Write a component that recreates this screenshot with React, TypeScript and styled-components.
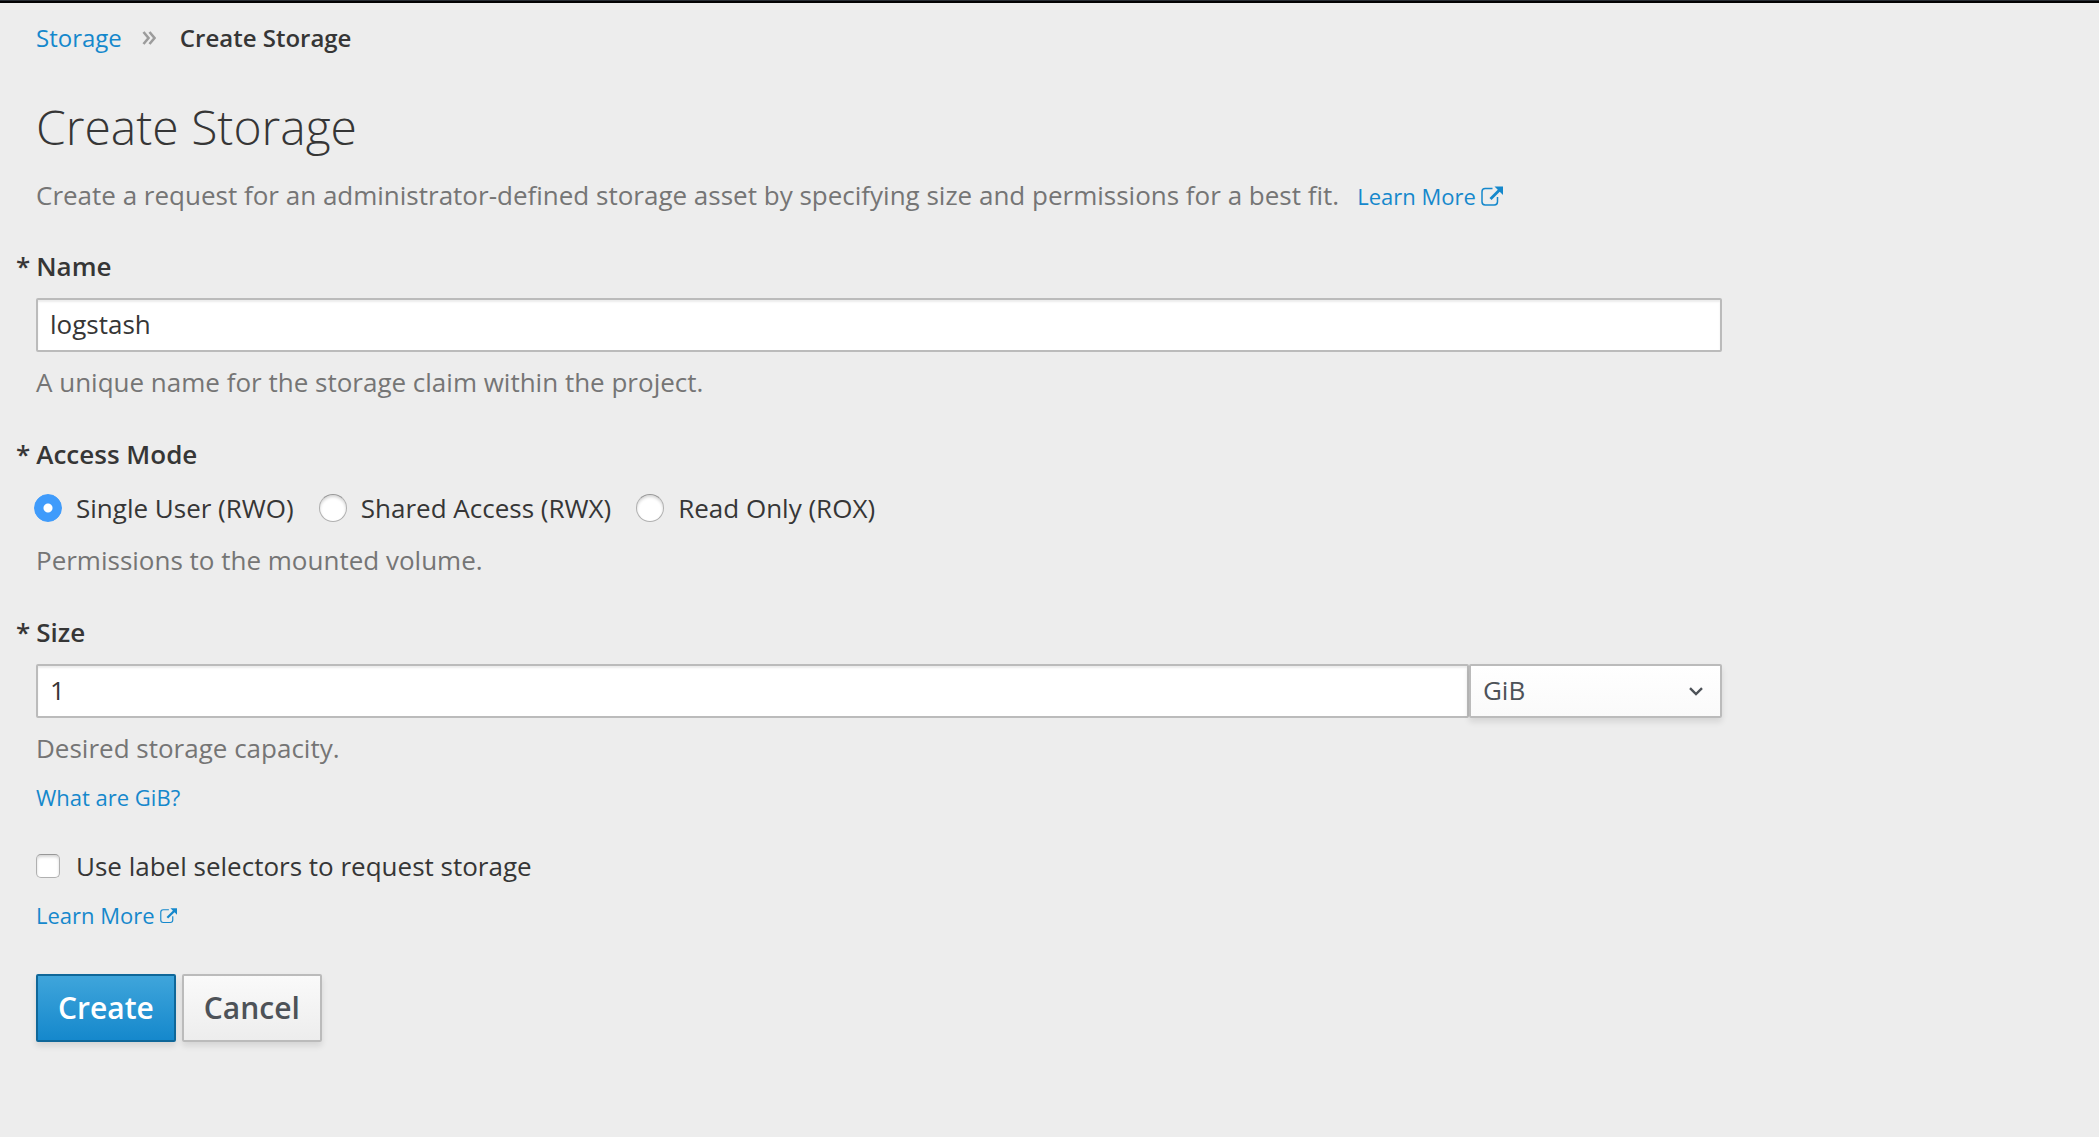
import React, { useState } from "react";
import styled, { createGlobalStyle, css } from "styled-components";

const GlobalStyle = createGlobalStyle`
  *, *::before, *::after { box-sizing: border-box; }
  body {
    margin: 0;
    background: #ededed;
    color: #363636;
    font-family: "Open Sans", "Noto Sans", sans-serif;
    font-size: 26px;
    line-height: 44px;
  }
  input, select, button { font: inherit; color: inherit; margin: 0; }
`;

const Masthead = styled.header`
  height: 3px;
  background: #030303;
  border-top: 1px solid #292e34;
`;

const Page = styled.main`
  padding: 13px 32px 80px 36px;
`;

const Link = styled.a`
  color: #1588cc;
  text-decoration: none;
  &:hover { text-decoration: underline; }
`;

const SmallLink = styled(Link)`
  display: inline-flex;
  align-items: center;
  gap: 5px;
  font-size: 22px;
  line-height: 36px;
`;

const Breadcrumb = styled.ol`
  display: flex;
  align-items: center;
  list-style: none;
  margin: 0;
  padding: 0;
  font-size: 24px;
  line-height: 44px;
`;

const Crumb = styled.li<{ $current?: boolean }>`
  display: flex;
  align-items: center;
  font-weight: ${(p) => (p.$current ? 600 : 400)};
`;

const Separator = styled.svg`
  width: 14px;
  height: 16px;
  margin: 0 24px 0 20px;
`;

const Title = styled.h1`
  margin: 35px 0 0;
  font-size: 48px;
  font-weight: 300;
  line-height: 64px;
`;

const Lead = styled.p`
  display: flex;
  flex-wrap: wrap;
  align-items: baseline;
  column-gap: 18px;
  margin: 14px 0 27px;
  color: #757575;
`;

const Columns = styled.div`
  display: grid;
  grid-template-columns: repeat(12, minmax(0, 1fr));
  column-gap: 40px;
`;

const Form = styled.form`
  grid-column: span 10;
`;

const Group = styled.div`
  margin-bottom: 28px;
`;

const labelStyle = css`
  display: flex;
  gap: 6px;
  width: fit-content;
  margin-left: -20px;
  font-weight: 600;
  &::before { content: "*"; }
`;

const FieldLabel = styled.label`${labelStyle}`;
const GroupLabel = styled.div`${labelStyle}`;

const TextInput = styled.input`
  display: block;
  flex: 1;
  width: 100%;
  min-width: 0;
  height: 54px;
  padding: 0 12px 2px;
  background: #fff;
  border: 2px solid #bbb;
  border-radius: 2px;
  box-shadow: inset 0 2px 2px rgba(3, 3, 3, 0.075);
  outline: none;
`;

const InputRow = styled.div`
  display: flex;
  margin-top: 10px;
`;

const SelectBox = styled.div`
  position: relative;
  width: 15%;
`;

const UnitSelect = styled.select`
  display: block;
  appearance: none;
  width: 100%;
  height: 54px;
  padding: 0 48px 2px 12px;
  color: #4d5258;
  background: linear-gradient(#fff, #fafafa);
  border: 2px solid #bbb;
  border-radius: 2px;
  box-shadow: 0 4px 6px rgba(3, 3, 3, 0.1);
  outline: none;
`;

const Chevron = styled.svg`
  position: absolute;
  top: 23px;
  right: 19px;
  width: 14px;
  height: 9px;
  pointer-events: none;
`;

const Help = styled.div`
  margin-top: 8px;
  color: #757575;
`;

const LinkLine = styled.div`
  display: flex;
  margin-top: 9px;
`;

const RadioRow = styled.div`
  display: flex;
  flex-wrap: wrap;
  column-gap: 25px;
  margin: 10px 0 0 -2px;
`;

const Choice = styled.label<{ $gap: number }>`
  display: flex;
  align-items: center;
  gap: ${(p) => p.$gap}px;
`;

const choiceBox = css`
  appearance: none;
  flex: none;
  background: #fff;
  border: 1px solid #b0b0b0;
  border-top-color: #989898;
  box-shadow: inset 0 2px 3px rgba(0, 0, 0, 0.16);
`;

const Radio = styled.input`
  ${choiceBox}
  width: 28px;
  height: 28px;
  border-radius: 50%;
  &:checked {
    border-color: #3f9bfb;
    background: radial-gradient(circle at center, #fff 0 4px, #3f9bfb 5px);
    box-shadow: none;
  }
`;

const Checkbox = styled.input`
  ${choiceBox}
  width: 24px;
  height: 24px;
  border-radius: 5px;
  &:checked {
    border-color: #3d97f7;
    background: #3f9bfb;
  }
`;

const CheckRow = styled.div`
  margin-top: 29px;
`;

const Actions = styled.div`
  display: flex;
  gap: 6px;
  margin-top: 41px;
`;

const Button = styled.button<{ $primary?: boolean }>`
  height: 68px;
  padding: 0 20px;
  font-size: 30px;
  font-weight: 600;
  line-height: 40px;
  color: ${(p) => (p.$primary ? "#fff" : "#4d5258")};
  background: ${(p) =>
    p.$primary ? "linear-gradient(#3fa5db, #1588cc)" : "linear-gradient(#fafafa, #ededed)"};
  border: 2px solid ${(p) => (p.$primary ? "#0f6799" : "#bbb")};
  border-radius: 2px;
  box-shadow: 0 4px 6px rgba(3, 3, 3, 0.1);
  cursor: pointer;
`;

function ExternalIcon({ size }: { size: number }) {
  return (
    <svg width={size} height={size} viewBox="0 0 22 20" fill="none" aria-hidden="true">
      <path
        d="M11.5 2.5H4.2Q1 2.500 1 5.700V15.800Q1 19 4.200 19H13.300Q16.500 19 16.500 15.800V11"
        stroke="currentColor"
        strokeWidth="1.500"
      />
      <path d="M9.500 13L18.500 4" stroke="currentColor" strokeWidth="2.800" />
      <path d="M13.500 0.500H22V9Z" fill="currentColor" />
    </svg>
  );
}

const modes = [
  { value: "RWO", label: "Single User (RWO)" },
  { value: "RWX", label: "Shared Access (RWX)" },
  { value: "ROX", label: "Read Only (ROX)" },
];

export default function App() {
  const [name, setName] = useState("logstash");
  const [mode, setMode] = useState("RWO");
  const [size, setSize] = useState("1");
  const [unit, setUnit] = useState("GiB");
  const [selectors, setSelectors] = useState(false);

  return (
    <>
      <GlobalStyle />
      <Masthead />
      <Page>
        <nav aria-label="Breadcrumb">
          <Breadcrumb>
            <Crumb>
              <Link href="#storage">Storage</Link>
              <Separator viewBox="0 0 14 16" fill="none" aria-hidden="true">
                <path
                  d="M1.500 2L6.500 8L1.500 14M7.500 2L12.500 8L7.500 14"
                  stroke="#9c9c9c"
                  strokeWidth="2.600"
                />
              </Separator>
            </Crumb>
            <Crumb $current aria-current="page">Create Storage</Crumb>
          </Breadcrumb>
        </nav>
        <Title>Create Storage</Title>
        <Lead>
          Create a request for an administrator-defined storage asset by specifying size and
          permissions for a best fit.
          <SmallLink href="#learn-storage">
            Learn More
            <ExternalIcon size={22} />
          </SmallLink>
        </Lead>
        <Columns>
          <Form onSubmit={(e) => e.preventDefault()}>
            <Group>
              <FieldLabel htmlFor="claim-name">Name</FieldLabel>
              <InputRow>
                <TextInput
                  id="claim-name"
                  type="text"
                  value={name}
                  onChange={(e) => setName(e.target.value)}
                />
              </InputRow>
              <Help>A unique name for the storage claim within the project.</Help>
            </Group>

            <Group role="radiogroup" aria-labelledby="access-mode">
              <GroupLabel id="access-mode">Access Mode</GroupLabel>
              <RadioRow>
                {modes.map((m) => (
                  <Choice key={m.value} $gap={14}>
                    <Radio
                      type="radio"
                      name="accessMode"
                      checked={mode === m.value}
                      onChange={() => setMode(m.value)}
                    />
                    {m.label}
                  </Choice>
                ))}
              </RadioRow>
              <Help>Permissions to the mounted volume.</Help>
            </Group>

            <FieldLabel htmlFor="claim-size">Size</FieldLabel>
            <InputRow>
              <TextInput
                id="claim-size"
                type="text"
                inputMode="numeric"
                value={size}
                onChange={(e) => setSize(e.target.value)}
              />
              <SelectBox>
                <UnitSelect
                  aria-label="Unit"
                  value={unit}
                  onChange={(e) => setUnit(e.target.value)}
                >
                  <option>MiB</option>
                  <option>GiB</option>
                  <option>TiB</option>
                </UnitSelect>
                <Chevron viewBox="0 0 14 9" fill="none" aria-hidden="true">
                  <path d="M1 1.200L7 7L13 1.200" stroke="#4d5258" strokeWidth="2.400" />
                </Chevron>
              </SelectBox>
            </InputRow>
            <Help>Desired storage capacity.</Help>
            <LinkLine>
              <SmallLink href="#units">What are GiB?</SmallLink>
            </LinkLine>

            <CheckRow>
              <Choice $gap={16}>
                <Checkbox
                  type="checkbox"
                  checked={selectors}
                  onChange={(e) => setSelectors(e.target.checked)}
                />
                Use label selectors to request storage
              </Choice>
            </CheckRow>
            <LinkLine>
              <SmallLink href="#learn-selectors">
                Learn More
                <ExternalIcon size={17} />
              </SmallLink>
            </LinkLine>

            <Actions>
              <Button type="submit" $primary>Create</Button>
              <Button type="button">Cancel</Button>
            </Actions>
          </Form>
        </Columns>
      </Page>
    </>
  );
}
